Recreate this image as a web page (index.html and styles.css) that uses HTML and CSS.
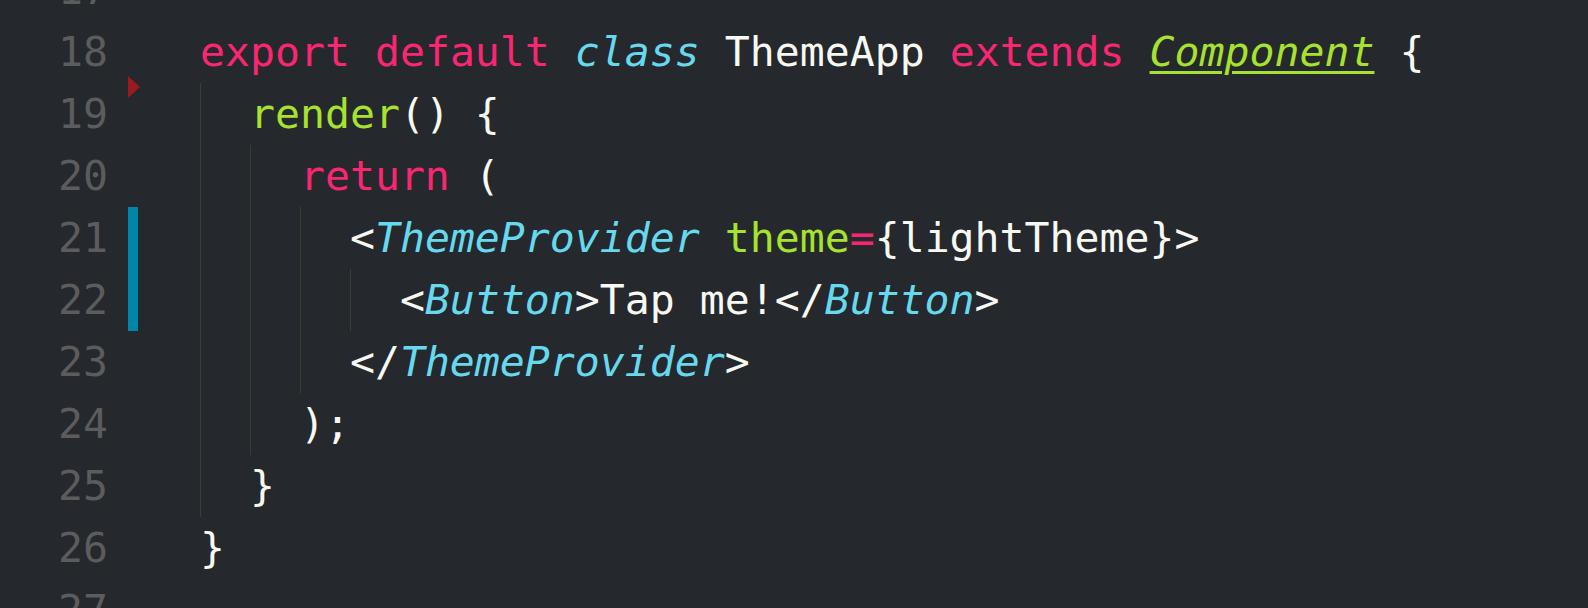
FILE: index.html
```html
<!DOCTYPE html>
<html lang="en">
<head>
<meta charset="utf-8">
<title>ThemeApp.js</title>
<link rel="stylesheet" href="styles.css">
</head>
<body>
<div class="editor">
  <div class="line"><div class="gutter"><span class="num">17</span><span class="mark"></span></div><div class="code"></div></div>
  <div class="line"><div class="gutter"><span class="num">18</span><span class="mark"></span></div><div class="code"><span class="kw">export</span> <span class="kw">default</span> <span class="st">class</span> <span class="tx">ThemeApp</span> <span class="kw">extends</span> <span class="inh">Component</span> <span class="tx">{</span></div></div>
  <div class="line"><div class="gutter"><span class="num">19</span><span class="mark"><span class="fold"></span></span></div><div class="code"><span class="ind"></span><span class="fn">render</span><span class="tx">() {</span></div></div>
  <div class="line"><div class="gutter"><span class="num">20</span><span class="mark"></span></div><div class="code"><span class="ind"></span><span class="ind"></span><span class="kw">return</span> <span class="tx">(</span></div></div>
  <div class="line"><div class="gutter"><span class="num">21</span><span class="mark mod"></span></div><div class="code"><span class="ind"></span><span class="ind"></span><span class="ind"></span><span class="tx">&lt;</span><span class="tag">ThemeProvider</span> <span class="attr">theme</span><span class="kw">=</span><span class="tx">{lightTheme}&gt;</span></div></div>
  <div class="line"><div class="gutter"><span class="num">22</span><span class="mark mod"></span></div><div class="code"><span class="ind"></span><span class="ind"></span><span class="ind"></span><span class="ind"></span><span class="tx">&lt;</span><span class="tag">Button</span><span class="tx">&gt;Tap me!&lt;/</span><span class="tag">Button</span><span class="tx">&gt;</span></div></div>
  <div class="line"><div class="gutter"><span class="num">23</span><span class="mark"></span></div><div class="code"><span class="ind"></span><span class="ind"></span><span class="ind"></span><span class="tx">&lt;/</span><span class="tag">ThemeProvider</span><span class="tx">&gt;</span></div></div>
  <div class="line"><div class="gutter"><span class="num">24</span><span class="mark"></span></div><div class="code"><span class="ind"></span><span class="ind"></span><span class="tx">);</span></div></div>
  <div class="line"><div class="gutter"><span class="num">25</span><span class="mark"></span></div><div class="code"><span class="ind"></span><span class="tx">}</span></div></div>
  <div class="line"><div class="gutter"><span class="num">26</span><span class="mark"></span></div><div class="code"><span class="tx">}</span></div></div>
  <div class="line"><div class="gutter"><span class="num">27</span><span class="mark"></span></div><div class="code"></div></div>
</div>
</body>
</html>
```

FILE: styles.css
```css
html, body {
  margin: 0;
  padding: 0;
  background: #25282c;
  height: 100%;
  overflow: hidden;
}

.editor {
  margin-top: -41px;
  font-family: "DejaVu Sans Mono", "Liberation Mono", monospace;
  font-size: 41.5px;
  line-height: 62px;
  color: #f8f8f2;
}

.line {
  display: flex;
  height: 62px;
}

.gutter {
  display: flex;
  width: 200px;
  flex: none;
}

.num {
  width: 108px;
  text-align: right;
  color: #5b5c5e;
}

.mark {
  position: relative;
  width: 10px;
  margin-left: 20px;
}

.mark.mod {
  background: #0086a8;
}

.fold {
  position: absolute;
  left: 0;
  top: -7px;
  width: 0;
  height: 0;
  border-top: 11.5px solid transparent;
  border-bottom: 11.5px solid transparent;
  border-left: 12px solid #9b1a1e;
}

.code {
  flex: 1;
  display: block;
  white-space: pre;
  height: 62px;
}

.ind {
  display: inline-block;
  vertical-align: top;
  width: 2ch;
  height: 62px;
  box-shadow: inset 1px 0 0 #3d3c35;
}

.kw { color: #f92672; }
.st { color: #66d9ef; font-style: italic; }
.tag { color: #66d9ef; font-style: italic; }
.fn { color: #a6e22e; }
.attr { color: #a6e22e; }
.tx { color: #f8f8f2; }
.inh {
  color: #a6e22e;
  font-style: italic;
  text-decoration: underline;
  text-decoration-thickness: 3px;
  text-underline-offset: 5px;
}
```
